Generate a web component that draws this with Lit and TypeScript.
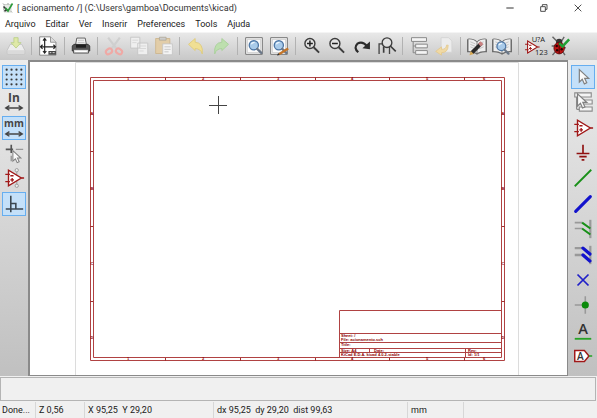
import { LitElement, html, svg, css, SVGTemplateResult } from "lit";
import { customElement, property } from "lit/decorators.js";

type Tool = { id: string; label: string; on?: boolean; off?: boolean };

const opAmp = svg`<path d="M6 3.500v17l14-8.500z" fill="#fff" stroke="#a01818" stroke-width="1.5"/><path d="M2.500 8h5M2.500 16h5M20 12h3M8 9.500h3.500M8 14h4M10 12v4" stroke="#a01818" stroke-width="1.5" fill="none"/>`;
const lens = (x: number, y: number) => svg`<circle cx=${x} cy=${y} r="4.6" fill="#a9cbea" stroke="#4d76a5" stroke-width="1.3"/><path d="M${x - 2.6} ${y - 1}q1-2.2 3.4-2" stroke="#eef7ff" stroke-width="1.3" fill="none"/><path d="M${x + 3.4} ${y + 3.6}l4 4" stroke="#6b7889" stroke-width="2.4" stroke-linecap="round"/>`;
const glass = svg`<circle cx="9.500" cy="9" r="6" fill="#e4e4e4" stroke="#3c3c3c" stroke-width="1.700"/><path d="M14 13.500l6.500 6.500" stroke="#3c3c3c" stroke-width="2.300"/>`;
const book = svg`<path d="M0 4.500l1-1.300q7-.5 11 3.300 4-3.800 11-3.300l1 1.300v15q-8-.6-12 3-4-3.600-12-3z" fill="#6d6d6d"/><path d="M1.800 3.800q7 0 9.700 3.600v13Q8.500 18 1.800 18zM22.200 3.800q-7 0-9.700 3.600v13Q15.500 18 22.200 18z" fill="#eee"/><path d="M4 7l6 2.500M4 10l6 2.500M4 13l6 2.500M20 7l-6 2.500M20 10l-6 2.500M20 13l-6 2.500" stroke="#b5b5b5" stroke-width=".9"/>`;
const pointer = svg`<path d="M8 4v13.500l3.200-3 2.300 5 2.600-1.200-2.300-4.800h4.400z" fill="#fafafa" stroke="#808080" stroke-width="1.300"/>`;
const arrows = svg`<path d="M3.500 18.500h17M7 16l-4 2.500 4 2.500M17 16l4 2.500-4 2.500" stroke="#444" stroke-width="1.500" fill="none"/>`;
const treeRows = svg`<path d="M5 6v14M5 12h4M5 20h4" stroke="#8b8b8b" stroke-width="1.300" fill="none"/><path d="M3 2h18v4.500H3zM8 9.800h14v4.400H8zM8 17.500h14V22H8z" fill="#f4f4f4" stroke="#8b8b8b" stroke-width="1.200"/>`;
const pageWithLens = svg`<path d="M2 2h20v20H2z" fill="#fbfbfb" stroke="#777" stroke-width="1.200"/><path d="M4 4h16v16H4z" fill="none" stroke="#bbb" stroke-width=".8"/><g transform="translate(-2 -2) scale(1.200)">${lens(11.5, 11)}</g>`;

const ICONS: Record<string, SVGTemplateResult> = {
  app: svg`<path d="M2 3l18 18M2 14h9M12 2v7" stroke="#9aa09a" stroke-width="2"/><path d="M4 5h14v15H4z" fill="#e6ebe6" stroke="#a9afa9"/><path d="M3 9l7 7M5 18l6-3" stroke="#333" stroke-width="3"/><path d="M7 12l5 6L21 3" stroke="#2c9a3b" stroke-width="3.200" fill="none"/>`,
  save: svg`<path d="M5 10h14l3.500 7v4.500h-21V17z" fill="#ededed" stroke="#bfbfbf"/><path d="M2 17h20v4.500H2z" fill="#dadada"/><path d="M9.500 2v6h-3.500l6 6.500 6-6.500h-3.500V2z" fill="#dfe9a8" stroke="#b9cf86"/>`,
  sheet: svg`<path d="M2 1h13l6.500 6.500v15.500H2z" fill="#fff" stroke="#777"/><path d="M15 1v6.500h6.500" fill="#ddd" stroke="#888"/><path d="M8 3v17.500M3 13h18M6 5.500l2-2.500 2 2.500M6 18l2 2.500 2-2.500M5.500 10.500l-2.500 2.500 2.500 2.500M18.500 10.500l2.500 2.500-2.500 2.500" stroke="#222" stroke-width="1.400" fill="none"/><path d="M12.500 18h9v4.500h-9z" fill="#444"/><path d="M14 20h2M17.500 20h2.500" stroke="#fff"/>`,
  print: svg`<path d="M7 2.500h10l1.500 8h-13z" fill="#fff" stroke="#444"/><path d="M8 5h8M7.800 7.500h8.600" stroke="#aaa"/><path d="M3.500 10h17l2 2v6h-21v-6z" fill="#555" stroke="#2c2c2c"/><path d="M6 10.500h12V14H6z" fill="#1e1e1e"/><path d="M3 16h18v4.500H3z" fill="#d8d8d8" stroke="#444"/><path d="M5 18.500h14" stroke="#fff" stroke-width="1.500"/>`,
  cut: svg`<path d="M5 2l10.500 14M19 2L8.500 16" stroke="#cfcfcf" stroke-width="2.600"/><ellipse cx="6" cy="18.500" rx="4" ry="3" transform="rotate(-35 6 18.500)" fill="none" stroke="#efa9a5" stroke-width="2.500"/><ellipse cx="18" cy="18.500" rx="4" ry="3" transform="rotate(35 18 18.500)" fill="none" stroke="#efa9a5" stroke-width="2.500"/>`,
  copy: svg`<path d="M2 1.500h11v13H2zM10.500 8.500h12v14h-12z" fill="#efefef" stroke="#c3c3c3"/><path d="M4 5h7M4 8h5M12.500 12h8M12.500 15h8M12.500 18h5" stroke="#d2d2d2"/>`,
  paste: svg`<path d="M2 3h17v18H2z" fill="#e2cda8" stroke="#ccb48c"/><path d="M6.500 1.500h8v3.500h-8z" fill="#ccc" stroke="#b0a899"/><path d="M10.500 9.500h11.500v13H10.500z" fill="#f4f4f4" stroke="#c4c4c4"/><path d="M12.500 13h7.500M12.500 16h7.500M12.500 19h5" stroke="#bfbfbf"/>`,
  undo: svg`<path d="M3 10l8-7v4.500q10 .5 8.500 14-1.500-6-8.500-6.500v2.500z" fill="#f0df94" stroke="#dfca78"/>`,
  redo: svg`<path d="M21 10l-8-7v4.500Q3 8 4.500 21.500 6 15.500 13 15v2.500z" fill="#bddfae" stroke="#a5cf96"/>`,
  look: pageWithLens,
  lookEdit: svg`${pageWithLens}<path d="M12 22l11-7" stroke="#c4762a" stroke-width="2.800"/><path d="M9.500 23.500l1.500-3 1.800 2.400z" fill="#333"/>`,
  zoomIn: svg`${glass}<path d="M6 9h7M9.500 5.500v7" stroke="#222" stroke-width="1.800"/>`,
  zoomOut: svg`${glass}<path d="M6 9h7" stroke="#222" stroke-width="1.800"/>`,
  refresh: svg`<path d="M7.500 19.500Q1.500 14 6.500 9.200 12.500 5.500 18 12" fill="none" stroke="#2b2b2b" stroke-width="2.600"/><path d="M21.500 6.500v9.500l-9-1.200z" fill="#2b2b2b"/>`,
  fit: svg`<path d="M2.500 21.500V9.500h5M15 21.500V13" stroke="#444" stroke-width="1.600" fill="none"/><circle cx="12" cy="8" r="5.800" fill="#e4e4e4" fill-opacity=".6" stroke="#3c3c3c" stroke-width="1.600"/><path d="M8 12.500V20M16 12l6.500 6.500" stroke="#3c3c3c" stroke-width="2" fill="none"/>`,
  tree: treeRows,
  leave: svg`<path d="M8.500 2h9l4 4v13.500h-13z" fill="#ececec" stroke="#d2d2d2"/><path d="M15 11q0 5-6 5v-3l-7 5.500 7 4.500v-3q8 0 8-9z" fill="#f0d9a4" stroke="#e2c88e"/>`,
  libEdit: svg`${book}<path d="M6 20L17 9" stroke="#2a2a2a" stroke-width="4.500"/><path d="M15 11l3-3" stroke="#c98080" stroke-width="4.500"/><path d="M3 23l1.500-5 3.500 3.500z" fill="#d8a850"/>`,
  libView: svg`${book}<g transform="translate(-2 -2) scale(1.150)">${lens(11.5, 12.5)}</g>`,
  annotate: svg`<g transform="translate(-2 3) scale(.85)">${opAmp}</g><text x="8" y="7" font-size="9" fill="#222">U?A</text><text x="12" y="23" font-size="9" fill="#222">123</text>`,
  bug: svg`<path d="M3 1l5 5M17 1l-3 5M2 12h4M3 23l5-6M18 23l-4-6M19 14h-3" stroke="#666" stroke-width="1.700"/><circle cx="11" cy="7" r="3.800" fill="#333"/><ellipse cx="11" cy="14.500" rx="6.300" ry="7" fill="#c01212" stroke="#5a0a0a"/><path d="M11 8v13" stroke="#400" stroke-width="1.200"/><g fill="#2a0000"><circle cx="8" cy="12" r="1.500"/><circle cx="8.500" cy="17" r="1.500"/><circle cx="14" cy="16" r="1.500"/></g><path d="M11 8.500l4 4L23 4" stroke="#20a035" stroke-width="3" fill="none"/>`,

  grid: svg`<g fill="#3a3a3a">${[4, 9.3, 14.7, 20].map((y) => [4, 9.3, 14.7, 20].map((x) => svg`<circle cx=${x} cy=${y} r="1.200"/>`))}</g>`,
  inch: svg`<text x="12" y="12" font-size="13" font-weight="700" text-anchor="middle" fill="#444">In</text>${arrows}`,
  mm: svg`<text x="12" y="11" font-size="11" font-weight="700" text-anchor="middle" fill="#444">mm</text>${arrows}`,
  cursor: svg`<path d="M3 8h8M9 3v9" stroke="#555" stroke-width="1.800"/><path d="M14 8h8M9 15v6" stroke="#999" stroke-width="1.500"/><g transform="translate(4 6) scale(.85)">${pointer}</g>`,
  hiddenPins: svg`<path d="M15 5v15" stroke="#aaa" stroke-width="1.400"/><circle cx="15" cy="3.500" r="1.800" fill="#eee" stroke="#999"/><circle cx="15" cy="20.500" r="1.800" fill="#eee" stroke="#999"/>${opAmp}`,
  ortho: svg`<path d="M3 17.500h19M8.500 3v18M8.500 11.500h5.500v6" stroke="#3b4650" stroke-width="1.700" fill="none"/>`,

  pointer,
  hierarchy: svg`${treeRows}<g transform="translate(-2 -1)">${pointer}</g>`,
  component: opAmp,
  power: svg`<path d="M12 3v9M5 12.500h14M8 16h8M10.500 19.500h3" stroke="#8f1010" stroke-width="1.800" fill="none"/>`,
  wire: svg`<path d="M3 21L21 3" stroke="#189018" stroke-width="2"/>`,
  bus: svg`<path d="M4 20L20 4" stroke="#1212cc" stroke-width="3.400" stroke-linecap="round"/>`,
  wireEntry: svg`<path d="M20 2v20" stroke="#999" stroke-width="2.400"/><path d="M3 5h8M3 11.500h8" stroke="#999" stroke-width="1.800"/><path d="M11 5l9 6.500M11 11.500l9 6.500" stroke="#189018" stroke-width="2.200"/>`,
  busEntry: svg`<path d="M20 2v20" stroke="#999" stroke-width="2.400"/><path d="M3 4.500h8M3 12h8" stroke="#999" stroke-width="2.600"/><path d="M12 4.500l7.500 6.500M12 12l7.500 6.500" stroke="#1212cc" stroke-width="3.600" stroke-linecap="round"/>`,
  noConnect: svg`<path d="M6 6l12 12M18 6L6 18" stroke="#2020c8" stroke-width="1.900"/>`,
  junction: svg`<path d="M3 12h11M14.500 2.500v19" stroke="#999" stroke-width="1.700"/><circle cx="14.500" cy="12" r="3.900" fill="#0a8a0a"/>`,
  netLabel: svg`<text x="12" y="15.500" font-size="16" font-weight="600" text-anchor="middle" fill="#333">A</text><path d="M3 20.500h18" stroke="#26a326" stroke-width="2"/>`,
  globalLabel: svg`<path d="M3 6h10.500l5 6-5 6H3z" fill="#fff" stroke="#a01818" stroke-width="1.600"/><text x="9" y="16" font-size="11" font-weight="600" text-anchor="middle" fill="#333">A</text><path d="M18.500 12h3.500" stroke="#26a326" stroke-width="1.700"/>`,

  minimize: svg`<path d="M1 12h22" stroke="#333" stroke-width="3"/>`,
  restore: svg`<path d="M7 7V2h14v14h-5M2 8h14v14H2z" stroke="#333" stroke-width="2.600" fill="none"/>`,
  close: svg`<path d="M2 2l20 20M22 2L2 22" stroke="#333" stroke-width="2.600"/>`,
};

const TOP: Tool[][] = [
  [{ id: "save", label: "Save", off: true }],
  [{ id: "sheet", label: "Page settings" }],
  [{ id: "print", label: "Print" }],
  [{ id: "cut", label: "Cut", off: true }, { id: "copy", label: "Copy", off: true }, { id: "paste", label: "Paste", off: true }],
  [{ id: "undo", label: "Undo", off: true }, { id: "redo", label: "Redo", off: true }],
  [{ id: "look", label: "Find" }, { id: "lookEdit", label: "Find and replace" }],
  [{ id: "zoomIn", label: "Zoom in" }, { id: "zoomOut", label: "Zoom out" }, { id: "refresh", label: "Redraw" }, { id: "fit", label: "Zoom to fit" }],
  [{ id: "tree", label: "Navigate hierarchy" }, { id: "leave", label: "Leave sheet", off: true }],
  [{ id: "libEdit", label: "Library editor" }, { id: "libView", label: "Library browser" }],
  [{ id: "annotate", label: "Annotate" }, { id: "bug", label: "Rules check" }],
];

const LEFT: Tool[] = [
  { id: "grid", label: "Grid", on: true },
  { id: "inch", label: "Inches" },
  { id: "mm", label: "Millimetres", on: true },
  { id: "cursor", label: "Cursor shape" },
  { id: "hiddenPins", label: "Hidden pins" },
  { id: "ortho", label: "Orthogonal wires", on: true },
];

const RIGHT: Tool[] = [
  { id: "pointer", label: "Select", on: true },
  { id: "hierarchy", label: "Enter sheet" },
  { id: "component", label: "Place component" },
  { id: "power", label: "Place power port" },
  { id: "wire", label: "Place wire" },
  { id: "bus", label: "Place bus" },
  { id: "wireEntry", label: "Wire to bus entry" },
  { id: "busEntry", label: "Bus to bus entry" },
  { id: "noConnect", label: "No connect" },
  { id: "junction", label: "Junction" },
  { id: "netLabel", label: "Net label" },
  { id: "globalLabel", label: "Global label" },
];

const MENUS = ["Arquivo", "Editar", "Ver", "Inserir", "Preferences", "Tools", "Ajuda"];
const STATUS = ["Done...", "Z 0,56", "X 95,25  Y 29,20", "dx 95,25  dy 29,20  dist 99,63", "mm", ""];

@customElement("tool-button")
export class ToolButton extends LitElement {
  @property({ attribute: false }) tool!: Tool;

  static styles = css`
    :host { display: flex; align-items: center; justify-content: center; }
    .button {
      width: 24px; height: 24px; padding: 0; border: 1px solid transparent; background: none;
      display: flex; align-items: center; justify-content: center;
      font-family: "Open Sans", "Noto Sans", sans-serif;
    }
    .on { background: #c4e0f9; border-color: #66aef0; }
    .icon { width: var(--icon-size, 22px); height: var(--icon-size, 22px); flex: none; overflow: visible; }
  `;

  render() {
    const t = this.tool;
    return html`<button class="button ${t.on ? "on" : ""}" aria-label=${t.label} ?disabled=${t.off}>
      <svg class="icon" viewBox="0 0 24 24" fill="none">${ICONS[t.id]}</svg>
    </button>`;
  }
}

@customElement("schematic-sheet")
export class SchematicSheet extends LitElement {
  static styles = css`
    :host { display: block; min-width: 0; min-height: 0; background: #fff; }
    .drawing { display: block; width: 100%; height: 100%; }
    .edge { fill: none; stroke: #dcdcdc; stroke-width: 1; }
    .line { fill: none; stroke: #b04242; stroke-width: 1; }
    .tick { fill: none; stroke: #a03030; stroke-width: 1; }
    .mark { fill: #8b0000; font: 700 4px "Liberation Sans", sans-serif; text-anchor: middle; }
    .note { fill: #8b0000; font: 700 4px "Liberation Sans", sans-serif; }
    .cross { stroke: #444; stroke-width: 1; }
  `;

  render() {
    const cols = [128, 203, 278, 352, 427, 484];
    const rows = [114, 189, 264, 338];
    return html`<svg class="drawing" viewBox="30 62 537 313" role="img" aria-label="Sheet">
      <path class="edge" d="M75.500 375V62.500H518.500V375"/>
      <path class="line" d="M90.500 77.500H504.500V360.500H90.500zM93.500 80.500H501.500V357.500H93.500z"/>
      ${[165.5, 240.5, 315.5, 389.5, 464.5].map((x) => svg`<path class="tick" d="M${x} 77v3M${x} 358v3"/>`)}
      ${[151.5, 226.5, 301.5].map((y) => svg`<path class="tick" d="M90 ${y}h3M502 ${y}h3"/>`)}
      ${cols.map((x, i) => svg`<text class="mark" x=${x} y="80">${i + 1}</text><text class="mark" x=${x} y="360">${i + 1}</text>`)}
      ${rows.map((y, i) => svg`<text class="mark" x="92" y=${y + 1}>${"ABCD"[i]}</text><text class="mark" x="503" y=${y + 1}>${"ABCD"[i]}</text>`)}
      <path class="line" d="M339.500 357V310.500H501M340 333.500H501M340 342.500H501M340 348.500H501M340 352.500H501M369.500 348V352M465.500 348V357"/>
      <text class="note" x="341" y="337">Sheet: /</text>
      <text class="note" x="341" y="341">File: acionamento.sch</text>
      <text class="note" x="341" y="346">Title:</text>
      <text class="note" x="341" y="352">Size: A4</text>
      <text class="note" x="374" y="352">Date:</text>
      <text class="note" x="468" y="352">Rev:</text>
      <text class="note" x="341" y="356">KiCad E.D.A.  kicad 4.0.2-stable</text>
      <text class="note" x="468" y="356">Id: 1/1</text>
      <path class="cross" d="M209 105.500H227M218.500 96V114"/>
    </svg>`;
  }
}

@customElement("app-root")
export class AppRoot extends LitElement {
  static styles = css`
    :host {
      display: flex; flex-direction: column; min-height: 100vh; background: #f0f0f0;
      font: 9px/16px Roboto, "Noto Sans", sans-serif; color: #1a1a1a;
    }
    .title { display: flex; align-items: center; height: 16px; background: #fff; padding: 0 2px; }
    .logo { width: 12px; height: 12px; margin-right: 3px; }
    .name { flex: 1; font-size: 9px; font-weight: 400; margin: 0; white-space: nowrap; color: #333; }
    .control { width: 34px; height: 16px; padding: 0; border: 0; background: none; display: grid; place-items: center; }
    .glyph { width: 8px; height: 8px; }
    .menu { display: flex; gap: 10px; height: 16px; padding: 0 5px; background: #fff; }
    .item { font: inherit; color: inherit; padding: 0; border: 0; background: none; }
    .tools {
      --icon-size: 20px;
      display: flex; align-items: center; height: 28px; padding: 0 25px 1px 3px;
      background: linear-gradient(#e8e8e8, #c8c8c8); border-top: 1px solid #f4f4f4; box-sizing: border-box;
    }
    .tool { flex: none; width: 25px; }
    .rule { flex: 1 1 7px; max-width: 8px; display: flex; justify-content: center; }
    .rule::before { content: ""; width: 1px; height: 18px; background: #b2b2b2; }
    .main { flex: 1; display: grid; grid-template-columns: 28px minmax(0, 1fr) 29px; min-height: 316px; }
    .side {
      display: grid; grid-template-rows: repeat(12, minmax(24px, 1fr)); box-sizing: border-box;
      padding: 4px 0 7px; background: linear-gradient(#ececec, #c0c0c0);
    }
    .sheet { border: 1px solid #8a8a8a; border-width: 2px 1px 1px 2px; }
    .messages { height: 24px; box-sizing: border-box; margin: 1px 1px 0 0; border: 1px solid #b4b4b4; }
    .status { display: grid; grid-template-columns: 36fr 49fr 129fr 194fr 56fr 133fr; height: 17px; align-items: end; }
    .cell { padding-left: 3px; white-space: pre; border-right: 1px solid #d7d7d7; height: 16px; line-height: 16px; }
    .cell:first-child { padding-left: 2px; }
    .cell:last-child { border-right: 0; }
  `;

  private side(tools: Tool[], name: string) {
    return html`<nav class="side" aria-label="${name} tools">${tools.map((t) => html`<tool-button .tool=${t}></tool-button>`)}</nav>`;
  }

  render() {
    return html`
      <header class="title">
        <svg class="logo" viewBox="0 0 24 24" fill="none">${ICONS.app}</svg>
        <h1 class="name">[ acionamento /] (C:\\Users\\gamboa\\Documents\\kicad)</h1>
        ${["minimize", "restore", "close"].map((id) => html`<button class="control" aria-label=${id}><svg class="glyph" viewBox="0 0 24 24" fill="none">${ICONS[id]}</svg></button>`)}
      </header>
      <nav class="menu">${MENUS.map((m) => html`<button class="item">${m}</button>`)}</nav>
      <div class="tools" role="toolbar">
        ${TOP.map((group, i) => html`${i ? html`<span class="rule"></span>` : ""}${group.map((t) => html`<tool-button class="tool" .tool=${t}></tool-button>`)}`)}
      </div>
      <main class="main">
        ${this.side(LEFT, "left")}
        <schematic-sheet class="sheet"></schematic-sheet>
        ${this.side(RIGHT, "right")}
      </main>
      <section class="messages" aria-label="Messages"></section>
      <footer class="status">${STATUS.map((s) => html`<span class="cell">${s}</span>`)}</footer>
    `;
  }
}
